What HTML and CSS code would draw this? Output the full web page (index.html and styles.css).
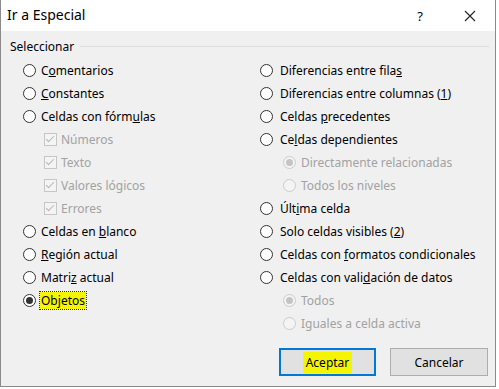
FILE: index.html
```html
<!DOCTYPE html>
<html lang="es">
<head>
    <meta charset="UTF-8">
    <title>Ir a Especial</title>
    <link rel="stylesheet" href="styles.css">
</head>
<body>
    <div class="dialog">
        <div class="titlebar">
            <span class="title">Ir a Especial</span>
            <span class="help">?</span>
            <span class="close">
                <svg width="12" height="12" viewBox="0 0 12 12"><path d="M1 1 L11 11 M11 1 L1 11" stroke="#222" stroke-width="1.1" fill="none"/></svg>
            </span>
        </div>
        <div class="content">
            <div class="group-label">
                <span>Seleccionar</span>
                <span class="rule"></span>
            </div>
            <div class="columns">
                <div class="col">
                    <div class="row"><span class="radio"></span><span>C<u>o</u>mentarios</span></div>
                    <div class="row"><span class="radio"></span><span><u>C</u>onstantes</span></div>
                    <div class="row"><span class="radio"></span><span>Celdas con fórm<u>u</u>las</span></div>
                    <div class="row sub disabled"><span class="check"></span><span>Números</span></div>
                    <div class="row sub disabled"><span class="check"></span><span>Texto</span></div>
                    <div class="row sub disabled"><span class="check"></span><span>Valores lógicos</span></div>
                    <div class="row sub disabled"><span class="check"></span><span>Errores</span></div>
                    <div class="row"><span class="radio"></span><span>Celdas en <u>b</u>lanco</span></div>
                    <div class="row"><span class="radio"></span><span><u>R</u>egión actual</span></div>
                    <div class="row"><span class="radio"></span><span>Matri<u>z</u> actual</span></div>
                    <div class="row"><span class="radio on"></span><span class="focus">Ob<u>j</u>etos</span></div>
                </div>
                <div class="col">
                    <div class="row"><span class="radio"></span><span>Diferencias entre fila<u>s</u></span></div>
                    <div class="row"><span class="radio"></span><span>Diferencias entre columnas (<u>1</u>)</span></div>
                    <div class="row"><span class="radio"></span><span>Celdas <u>p</u>recedentes</span></div>
                    <div class="row"><span class="radio"></span><span>Ce<u>l</u>das dependientes</span></div>
                    <div class="row sub disabled"><span class="radio on"></span><span>Directamente relacionadas</span></div>
                    <div class="row sub disabled"><span class="radio"></span><span>Todos los niveles</span></div>
                    <div class="row"><span class="radio"></span><span>Últ<u>i</u>ma celda</span></div>
                    <div class="row"><span class="radio"></span><span>Solo celdas visibles (<u>2</u>)</span></div>
                    <div class="row"><span class="radio"></span><span>Celdas con <u>f</u>ormatos condicionales</span></div>
                    <div class="row"><span class="radio"></span><span>Celdas con vali<u>d</u>ación de datos</span></div>
                    <div class="row sub disabled"><span class="radio on"></span><span>Todos</span></div>
                    <div class="row sub disabled"><span class="radio"></span><span>Iguales a celda activa</span></div>
                </div>
            </div>
            <div class="buttons">
                <button class="btn default"><span class="mark">Aceptar</span></button>
                <button class="btn">Cancelar</button>
            </div>
        </div>
    </div>
</body>
</html>
```

FILE: styles.css
```css
body {
    margin: 0;
    background: #ffffff;
    font-family: 'Noto Sans', sans-serif;
    font-size: 12px;
    color: #000;
}

.dialog {
    width: 494px;
    height: 386px;
    background: #f0f0f0;
    border: 1px solid #8a8a8a;
    border-top: none;
    display: flex;
    flex-direction: column;
}

.titlebar {
    height: 31px;
    background: #ffffff;
    display: flex;
    align-items: center;
    padding-left: 6px;
}

.title {
    font-size: 14px;
    flex: 1;
    margin-top: -2px;
}

.help {
    font-size: 13px;
    width: 14px;
    margin-right: 37px;
    text-align: center;
}

.close {
    width: 12px;
    margin-right: 19px;
    display: flex;
}

.content {
    flex: 1;
    display: flex;
    flex-direction: column;
    padding: 7px 6px 0 9px;
}

.group-label {
    display: flex;
    align-items: center;
    height: 16px;
}

.rule {
    flex: 1;
    height: 1px;
    background: #dcdcdc;
    margin-left: 6px;
}

.columns {
    display: grid;
    grid-template-columns: 237px 1fr;
    padding-left: 13px;
    margin-top: 5px;
}

.row {
    height: 23px;
    display: flex;
    align-items: center;
    white-space: nowrap;
}

.row.sub {
    padding-left: 21px;
}

.col + .col .row.sub {
    padding-left: 23px;
}

.disabled {
    color: #a2a2a2;
}

.radio {
    width: 11px;
    height: 11px;
    border: 1px solid #333;
    border-radius: 50%;
    background: #fff;
    margin-right: 5px;
    display: flex;
    align-items: center;
    justify-content: center;
    flex-shrink: 0;
}

.col + .col .radio {
    margin-right: 7px;
}

.radio.on::after {
    content: "";
    width: 7px;
    height: 7px;
    border-radius: 50%;
    background: #333;
}

.disabled .radio {
    border-color: #cccccc;
    background: #f4f4f4;
}

.col + .col .disabled .radio {
    margin-right: 5px;
}

.disabled .radio.on::after {
    background: #c4c4c4;
}

.check {
    width: 11px;
    height: 11px;
    border: 1px solid #c6c6c6;
    background: #f4f4f4;
    margin-right: 4px;
    position: relative;
}

.check::after {
    content: "";
    position: absolute;
    left: 3px;
    top: 0px;
    width: 3px;
    height: 7px;
    border-right: 1px solid #b4b4b4;
    border-bottom: 1px solid #b4b4b4;
    transform: rotate(45deg);
}

.focus {
    background: #f5f500;
    outline: 1px dotted #333;
    padding: 0 1px;
    margin-left: -1px;
}

.buttons {
    display: flex;
    justify-content: flex-end;
    gap: 14px;
    margin-top: 13px;
    padding-right: 1px;
}

.btn {
    width: 98px;
    height: 28px;
    background: #e1e1e1;
    border: 1px solid #adadad;
    font-family: inherit;
    font-size: 12px;
    color: #000;
    padding: 0;
}

.btn.default {
    width: 97px;
    border: 2px solid #0078d7;
}

.mark {
    background: #f5f500;
    padding: 2px 3px;
}
```
